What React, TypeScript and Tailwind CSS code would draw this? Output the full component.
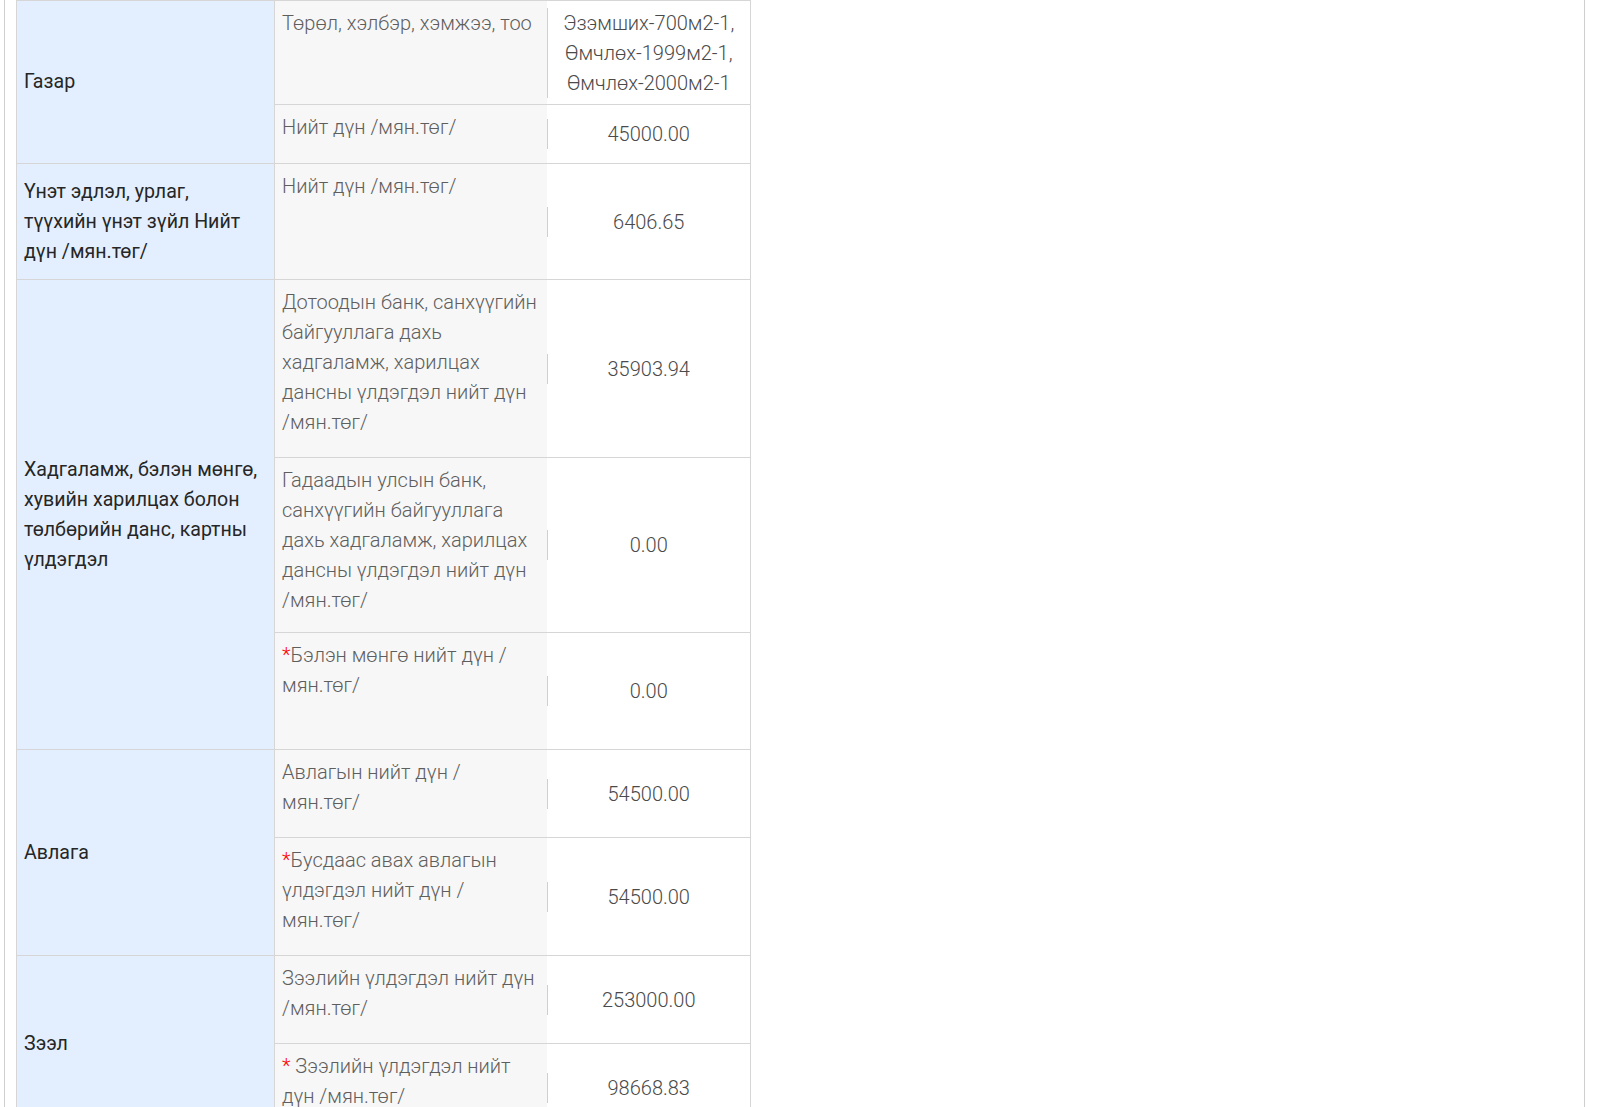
import React from "react";

type Item = {
  label: string;
  value: string;
  star?: "tight" | "spaced";
  rowH?: string;
  pb?: string;
};

type Group = {
  title: string;
  items: Item[];
};

// keep "/мян.төг/" together, the reference breaks before the slash
const unit = "/\u2060мян.төг/";

const groups: Group[] = [
  {
    title: "Газар",
    items: [
      {
        label: "Төрөл, хэлбэр, хэмжээ, тоо",
        value: "Эзэмших-700м2-1,\nӨмчлөх-1999м2-1,\nӨмчлөх-2000м2-1",
      },
      { label: `Нийт дүн ${unit}`, value: "45000.00", pb: "pb-[21px]" },
    ],
  },
  {
    title: "Үнэт эдлэл, урлаг, түүхийн үнэт зүйл Нийт дүн /мян.төг/",
    items: [{ label: `Нийт дүн ${unit}`, value: "6406.65" }],
  },
  {
    title:
      "Хадгаламж, бэлэн мөнгө, хувийн харилцах болон төлбөрийн данс, картны үлдэгдэл",
    items: [
      {
        label: `Дотоодын банк, санхүүгийн байгууллага дахь хадгаламж, харилцах дансны үлдэгдэл нийт дүн ${unit}`,
        value: "35903.94",
      },
      {
        label: `Гадаадын улсын банк, санхүүгийн байгууллага дахь хадгаламж, харилцах дансны үлдэгдэл нийт дүн ${unit}`,
        value: "0.00",
        pb: "pb-[17px]",
      },
      {
        label: "Бэлэн мөнгө нийт дүн / мян.төг/",
        value: "0.00",
        star: "tight",
        rowH: "h-[117px]",
      },
    ],
  },
  {
    title: "Авлага",
    items: [
      { label: "Авлагын нийт дүн / мян.төг/", value: "54500.00" },
      {
        label: "Бусдаас авах авлагын үлдэгдэл нийт дүн / мян.төг/",
        value: "54500.00",
        star: "tight",
      },
    ],
  },
  {
    title: "Зээл",
    items: [
      { label: `Зээлийн үлдэгдэл нийт дүн ${unit}`, value: "253000.00" },
      {
        label: `Зээлийн үлдэгдэл нийт дүн ${unit}`,
        value: "98668.83",
        star: "spaced",
      },
    ],
  },
];

export default function App() {
  return (
    <div className="h-screen overflow-hidden bg-white font-['Roboto',sans-serif] text-[20px] leading-[30px]">
      <div className="ml-[4px] mr-[15px] min-h-full border-x border-[#cfcfcf] pl-[11px]">
        <table className="w-[734px] table-fixed border-collapse">
          <colgroup>
            <col className="w-[258px]" />
            <col className="w-[272px]" />
            <col className="w-[204px]" />
          </colgroup>
          <tbody>
            {groups.map((g) =>
              g.items.map((it, i) => (
                <tr key={g.title + i} className={it.rowH}>
                  {i === 0 && (
                    <td
                      rowSpan={g.items.length}
                      className="border border-[#d6d6d6] bg-[#e3effe] pl-[7px] pr-[14px] py-[12.5px] align-middle text-[19.6px] font-normal text-[#262626]"
                    >
                      {g.title}
                    </td>
                  )}
                  <td
                    className={`border-y border-l border-[#d6d6d6] bg-[#f7f7f7] px-[7px] pt-[7px] align-top font-light text-[#5e5e5e] ${
                      it.pb ?? "pb-[20px]"
                    }`}
                  >
                    {it.star === "tight" && <span className="text-[#f00]">*</span>}
                    {it.star === "spaced" && <span className="text-[#f00]">* </span>}
                    {it.label}
                  </td>
                  <td className="border-y border-r border-[#d6d6d6] bg-white py-[6.5px] align-middle">
                    <div className="whitespace-pre-line border-l border-[#cfcfcf] text-center font-light text-[#4a4a4a]">
                      {it.value}
                    </div>
                  </td>
                </tr>
              ))
            )}
          </tbody>
        </table>
      </div>
    </div>
  );
}
